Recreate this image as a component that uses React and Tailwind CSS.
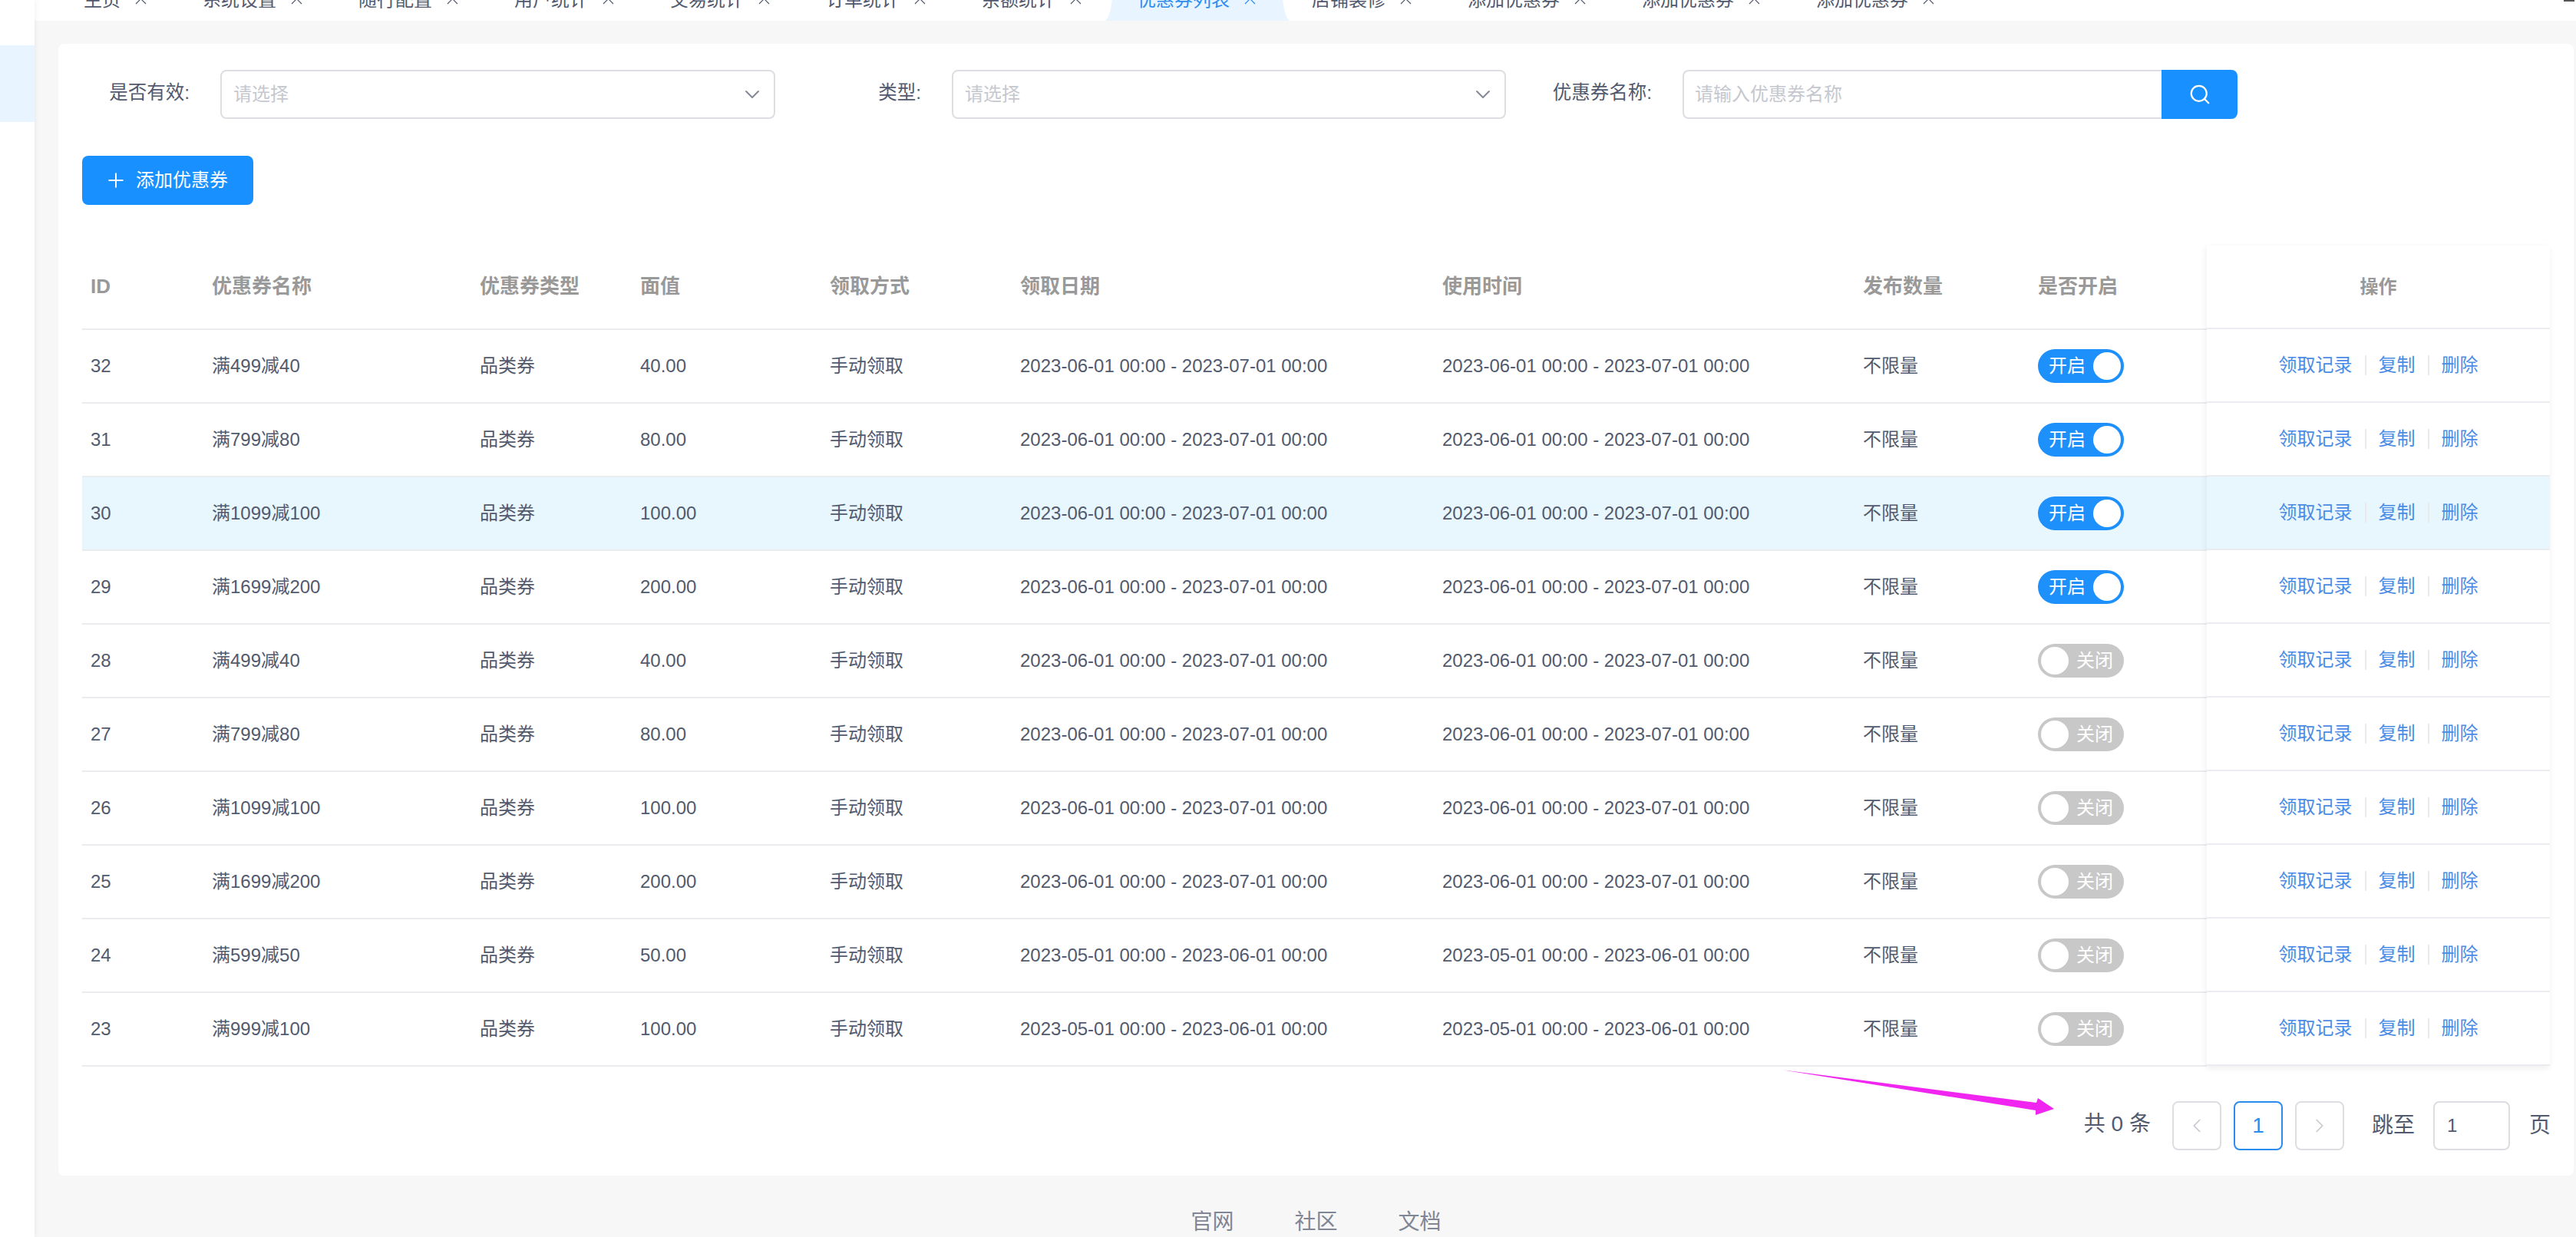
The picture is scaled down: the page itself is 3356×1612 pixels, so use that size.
import React from "react";
import { Search, ChevronDown, ChevronLeft, ChevronRight, Plus } from "lucide-react";

const GRID = "grid grid-cols-[158px_349px_209px_247px_248px_550px_548px_228px_231px] items-center";

const tabs = [
  ["主页"],
  ["系统设置"],
  ["随行配置"],
  ["用户统计"],
  ["交易统计"],
  ["订单统计"],
  ["余额统计"],
  ["优惠券列表", true],
  ["店铺装修"],
  ["添加优惠券"],
  ["添加优惠券"],
  ["添加优惠券"],
];

const J = "2023-06-01 00:00 - 2023-07-01 00:00";
const M = "2023-05-01 00:00 - 2023-06-01 00:00";
const rows = [
  [32, "满499减40", "40.00", J, true],
  [31, "满799减80", "80.00", J, true],
  [30, "满1099减100", "100.00", J, true, true],
  [29, "满1699减200", "200.00", J, true],
  [28, "满499减40", "40.00", J, false],
  [27, "满799减80", "80.00", J, false],
  [26, "满1099减100", "100.00", J, false],
  [25, "满1699减200", "200.00", J, false],
  [24, "满599减50", "50.00", M, false],
  [23, "满999减100", "100.00", M, false],
];

function Toggle({ on }) {
  return on ? (
    <div className="flex h-[44px] w-[112px] items-center justify-between rounded-full bg-[#1e90fb] pl-[14px] pr-[4px] text-[24px] leading-none text-white">
      <span>开启</span>
      <span className="h-[36px] w-[36px] rounded-full bg-white" />
    </div>
  ) : (
    <div className="flex h-[44px] w-[112px] items-center justify-between rounded-full bg-[#c8c8c8] pl-[4px] pr-[14px] text-[24px] leading-none text-white">
      <span className="h-[36px] w-[36px] rounded-full bg-white" />
      <span>关闭</span>
    </div>
  );
}

function SelectBox({ className }) {
  return (
    <div className={`flex h-[64px] items-center justify-between rounded-[8px] border-2 border-[#dcdee2] bg-white pl-[15px] pr-[12px] ${className}`}>
      <span className="text-[24px] text-[#c5c8ce]">请选择</span>
      <ChevronDown size={32} strokeWidth={1.4} className="text-[#808695]" />
    </div>
  );
}

function PageBtn({ children, active }) {
  return (
    <div className={`flex h-[64px] w-[64px] items-center justify-center rounded-[8px] border-2 text-[28px] ${active ? "border-[#2d8cf0] text-[#2d8cf0]" : "border-[#dcdee2] text-[#c5c8ce]"}`}>
      {children}
    </div>
  );
}

export default function App() {
  return (
    <div className="relative flex h-[1612px] w-[3356px] overflow-hidden bg-[#f7f7f7] font-['Liberation_Sans','Noto_Sans_CJK_SC',sans-serif] text-[#515a6e]">
      {/* sidebar */}
      <aside className="z-10 h-full w-[45px] shrink-0 bg-white pt-[59px] shadow-[2px_0_6px_rgba(0,0,0,0.05)]">
        <div className="h-[100px] bg-[#e8f4ff]" />
      </aside>

      {/* main */}
      <div className="flex min-w-0 flex-1 flex-col">
        {/* tab bar */}
        <div className="flex h-[27px] shrink-0 items-end overflow-hidden bg-white pl-[27px]">
          {tabs.map(([t, active], i) => (
            <div
              key={i}
              className={`relative flex shrink-0 items-center gap-[19px] pb-[15px] pl-[37px] pr-[36px] text-[24px] leading-[24px] ${active ? "text-[#2d8cf0]" : "text-[#515a6e]"}`}
            >
              {active && (
                <svg className="absolute bottom-0 left-[-5px] h-[60px] w-[240px]" viewBox="0 0 240 60" preserveAspectRatio="none">
                  <path d="M0 60 C6 56 8 40 10 24 L12 0 L228 0 L230 24 C232 40 234 56 240 60 Z" fill="#e8f4ff" />
                </svg>
              )}
              <span className="relative">{t}</span>
              <svg className="relative -mt-[4px] h-[15px] w-[15px]" viewBox="0 0 15 15" fill="none" stroke="currentColor" strokeWidth="1.2">
                <path d="M1 1 L14 14 M14 1 L1 14" />
              </svg>
            </div>
          ))}
          <span className="ml-auto mr-[2px] h-[2px] w-[14px] self-start bg-[#555555]" />
        </div>

        {/* content card */}
        <div className="ml-[31px] mr-[3px] mt-[30px] flex h-[1475px] shrink-0 flex-col rounded-[8px] bg-white pl-[31px] pr-[30px] pt-[34px]">
          <div className="flex items-center text-[24px]">
            <label className="w-[180px] pb-[4px] pr-[40px] text-right text-[24.5px]">是否有效:</label>
            <SelectBox className="w-[723px]" />
            <label className="w-[230px] pb-[4px] pr-[40px] text-right text-[24.5px]">类型:</label>
            <SelectBox className="w-[722px]" />
            <label className="w-[230px] pb-[4px] pr-[40px] text-right text-[24.5px]">优惠券名称:</label>
            <div className="flex h-[64px]">
              <div className="flex w-[624px] items-center rounded-l-[8px] border-2 border-r-0 border-[#dcdee2] pl-[14px] text-[#c5c8ce]">请输入优惠券名称</div>
              <button className="flex w-[99px] items-center justify-center rounded-r-[8px] bg-[#1890ff] text-white">
                <Search size={30} strokeWidth={1.8} />
              </button>
            </div>
          </div>

          <button className="mt-[48px] flex h-[64px] w-[223px] items-center gap-[11px] rounded-[8px] bg-[#1890ff] pl-[29px] text-[24px] text-white">
            <Plus size={30} strokeWidth={1.6} />
            <span>添加优惠券</span>
          </button>

          {/* table */}
          <div className="mt-[54px] flex">
            <div className="w-[2768px] shrink-0">
              <div className={`${GRID} h-[109px] border-b-2 border-[#eaecef] pb-[3px] pl-[11px] text-[26px] font-bold text-[#999999]`}>
                {["ID", "优惠券名称", "优惠券类型", "面值", "领取方式", "领取日期", "使用时间", "发布数量", "是否开启"].map((h) => (
                  <div key={h}>{h}</div>
                ))}
              </div>
              {rows.map((r) => (
                <div key={r[0]} className={`${GRID} h-[96px] border-b-2 border-[#eaecef] pl-[11px] text-[24px] ${r[5] ? "bg-[#e8f6fe]" : ""}`}>
                  <div>{r[0]}</div>
                  <div>{r[1]}</div>
                  <div>品类券</div>
                  <div>{r[2]}</div>
                  <div>手动领取</div>
                  <div>{r[3]}</div>
                  <div>{r[3]}</div>
                  <div>不限量</div>
                  <Toggle on={r[4]} />
                </div>
              ))}
            </div>

            {/* fixed action column */}
            <div className="z-10 -mt-[1px] h-[1069px] w-[447px] shrink-0 bg-white shadow-[-1px_3px_8px_rgba(0,0,0,0.07)]">
              <div className="flex h-[109px] items-center justify-center border-b-2 border-[#eaecef] text-[24px] font-bold text-[#999999]">操作</div>
              {rows.map((r) => (
                <div key={r[0]} className={`flex h-[96px] items-center justify-center border-b-2 border-[#eaecef] text-[24px] text-[#4a8ce6] ${r[5] ? "bg-[#e8f6fe]" : ""}`}>
                  <span>领取记录</span>
                  <span className="mx-[16px] h-[26px] w-[2px] bg-[#e8eaec]" />
                  <span>复制</span>
                  <span className="mx-[16px] h-[26px] w-[2px] bg-[#e8eaec]" />
                  <span>删除</span>
                </div>
              ))}
            </div>
          </div>

          {/* pagination */}
          <div className="mt-[45px] flex h-[64px] items-center justify-end text-[28px]">
            <span className="pb-[4px]">共 0 条</span>
            <div className="ml-[28px] flex gap-[16px]">
              <PageBtn><ChevronLeft size={30} strokeWidth={1.4} /></PageBtn>
              <PageBtn active>1</PageBtn>
              <PageBtn><ChevronRight size={30} strokeWidth={1.4} /></PageBtn>
            </div>
            <span className="ml-[36px]">跳至</span>
            <div className="ml-[24px] flex h-[64px] w-[100px] items-center rounded-[8px] border-2 border-[#dcdee2] pl-[16px] text-[24px]">1</div>
            <span className="ml-[25px]">页</span>
          </div>
        </div>

        {/* footer */}
        <div className="flex justify-center gap-[79px] pl-[28px] pt-[40px] text-[28px] text-[#808695]">
          <span>官网</span>
          <span>社区</span>
          <span>文档</span>
        </div>
      </div>

      {/* annotation arrow */}
      <svg className="absolute left-[2320px] top-[1390px] z-20 h-[70px] w-[360px]" viewBox="2320 1390 360 70">
        <path d="M2322 1394.3 L2653 1437 L2655 1431 L2676 1445 L2652 1453 L2652 1447 Z" fill="#f026f0" />
      </svg>
    </div>
  );
}
